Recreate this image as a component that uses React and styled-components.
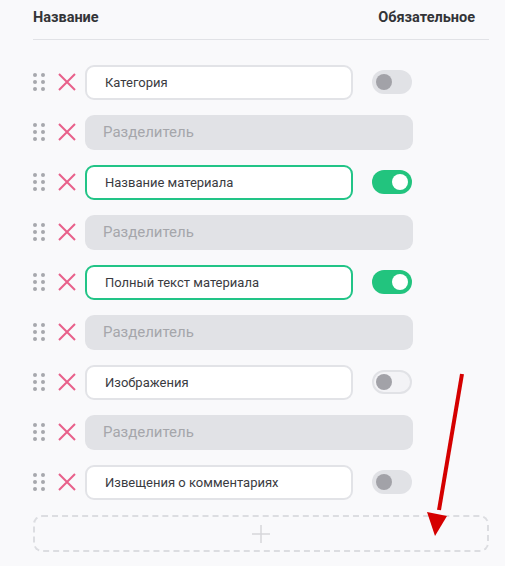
import React from "react";
import styled, { createGlobalStyle } from "styled-components";

const fields = [
  { label: "Категория", required: false },
  { sep: true },
  { label: "Название материала", required: true, active: true },
  { sep: true },
  { label: "Полный текст материала", required: true, active: true },
  { sep: true },
  { label: "Изображения", required: false, hover: true },
  { sep: true },
  { label: "Извещения о комментариях", required: false },
];

const App = () => {
  return (
    <Page>
      <GlobalStyle />
      <Header>
        <HeadTitle>Название</HeadTitle>
        <HeadTitle>Обязательное</HeadTitle>
      </Header>
      <List>
        {fields.map((field, i) => (
          <Row key={i}>
            <Handle>
              {[0, 1, 2, 3, 4, 5].map((d) => (
                <Dot key={d} />
              ))}
            </Handle>
            <Remove>
              <svg width="18" height="18" viewBox="0 0 18 18">
                <path d="M1 1 L17 17 M17 1 L1 17" stroke="#e8608a" strokeWidth="2" fill="none" />
              </svg>
            </Remove>
            {field.sep ? (
              <Separator>Разделитель</Separator>
            ) : (
              <>
                <Field $active={field.active}>{field.label}</Field>
                <Toggle $on={field.required} $hover={field.hover}>
                  <Knob $on={field.required} />
                </Toggle>
              </>
            )}
          </Row>
        ))}
      </List>
      <AddBox>
        <svg width="20" height="20" viewBox="0 0 20 20">
          <path d="M10 1 V19 M1 10 H19" stroke="#d6d6da" strokeWidth="1.5" fill="none" />
        </svg>
      </AddBox>
      <Arrow width="60" height="180" viewBox="0 0 60 180">
        <line x1="40" y1="4" x2="17" y2="140" stroke="#d50000" strokeWidth="4" />
        <polygon points="5,142 25,146 13,166" fill="#d50000" />
      </Arrow>
    </Page>
  );
};

const GlobalStyle = createGlobalStyle`
  body {
    margin: 0;
    background: #f9f9fb;
    font-family: Roboto, "Noto Sans", sans-serif;
  }
`;

const Page = styled.div`
  position: relative;
  width: 456px;
  padding: 0 16px 14px 33px;
`;

const Header = styled.div`
  display: flex;
  justify-content: space-between;
  align-items: center;
  box-sizing: border-box;
  height: 40px;
  padding: 0 14px 4px 0;
  border-bottom: 1px solid #e1e2e6;
`;

const HeadTitle = styled.span`
  font-size: 14.5px;
  font-weight: 700;
  color: #333437;
`;

const List = styled.div`
  display: flex;
  flex-direction: column;
  gap: 16px;
  padding-top: 25px;
`;

const Row = styled.div`
  display: flex;
  align-items: center;
  height: 34px;
`;

const Handle = styled.div`
  display: grid;
  grid-template-columns: 4px 4px;
  grid-auto-rows: 4px;
  column-gap: 4px;
  row-gap: 3px;
  width: 12px;
`;

const Dot = styled.span`
  width: 4px;
  height: 4px;
  border-radius: 50%;
  background: #a7a8ad;
`;

const Remove = styled.div`
  display: flex;
  width: 18px;
  height: 18px;
  margin-left: 13px;
  margin-right: 9px;
`;

const Field = styled.div`
  display: flex;
  align-items: center;
  width: 268px;
  height: 35px;
  box-sizing: border-box;
  padding-left: 18px;
  background: #fff;
  border: 2px solid ${(p) => (p.$active ? "#22c487" : "#e2e3e7")};
  border-radius: 9px;
  font-size: 13px;
  color: #3a3b3f;
`;

const Separator = styled.div`
  display: flex;
  align-items: center;
  width: 328px;
  height: 35px;
  box-sizing: border-box;
  padding-left: 18px;
  background: #e1e2e6;
  border-radius: 9px;
  font-size: 15px;
  color: #a5a6ab;
`;

const Toggle = styled.div`
  display: flex;
  align-items: center;
  justify-content: ${(p) => (p.$on ? "flex-end" : "flex-start")};
  width: 40px;
  height: 24px;
  margin-left: 19px;
  box-sizing: border-box;
  border-radius: 12px;
  background: ${(p) => (p.$on ? "#22c47e" : p.$hover ? "#f3f3f6" : "#e1e2e6")};
  border: ${(p) => (p.$hover ? "2px solid #e1e2e6" : "none")};
  padding: ${(p) => (p.$hover ? "0 2px" : "0 4px")};
`;

const Knob = styled.span`
  width: 16px;
  height: 16px;
  border-radius: 50%;
  background: ${(p) => (p.$on ? "#fff" : "#a2a2a8")};
`;

const AddBox = styled.div`
  display: flex;
  align-items: center;
  justify-content: center;
  height: 37px;
  margin-top: 16px;
  box-sizing: border-box;
  border: 2px dashed #dcdde1;
  border-radius: 9px;
`;

const Arrow = styled.svg`
  position: absolute;
  left: 422px;
  top: 370px;
`;

export default App;
